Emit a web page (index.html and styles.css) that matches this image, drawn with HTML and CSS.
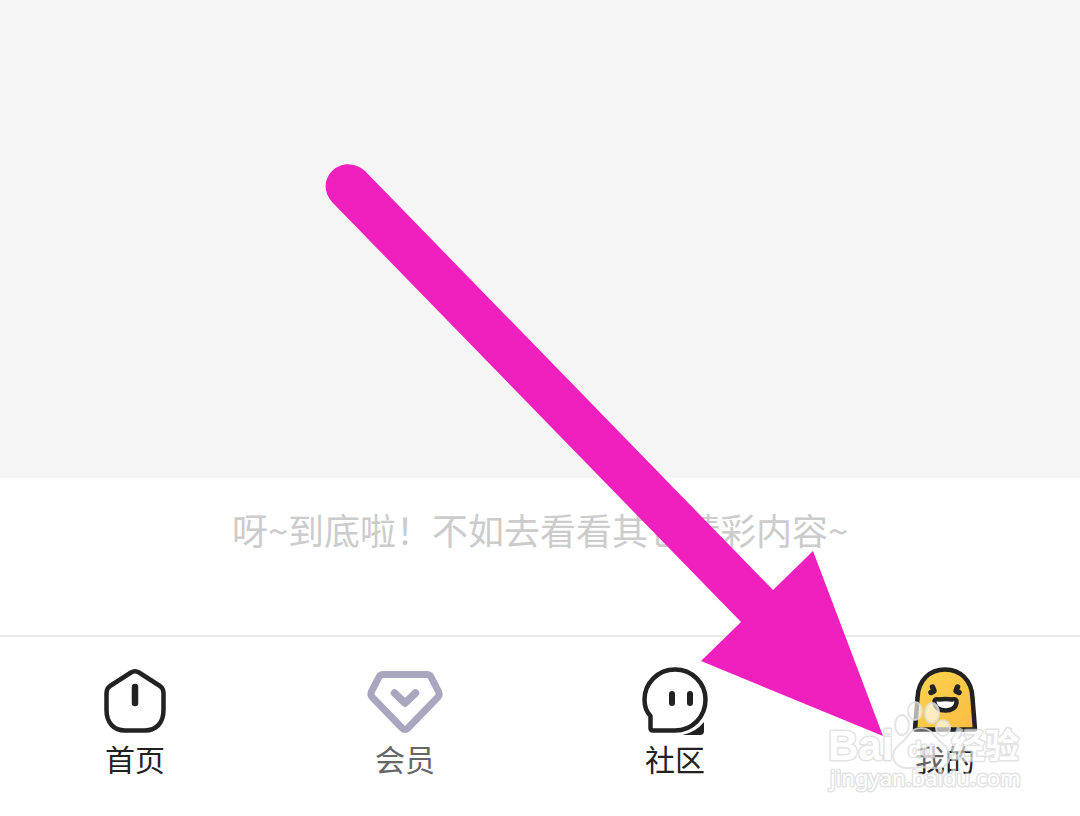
FILE: index.html
```html
<!DOCTYPE html>
<html lang="zh-CN">
<head>
    <meta charset="UTF-8">
    <meta name="viewport" content="width=device-width, initial-scale=1.0">
    <title>我的</title>
    <link rel="stylesheet" href="styles.css">
</head>
<body>
    <!-- Content Section -->
    <main class="content">
        <div class="feed"></div>
        <p class="feed-end">呀~到底啦！不如去看看其它精彩内容~</p>
    </main>

    <!-- Tab Bar -->
    <nav class="tab-bar">
        <a class="tab" href="#home">
            <svg class="tab-icon" viewBox="0 0 80 72" aria-hidden="true">
                <path d="M36 7.500Q40 5 44 7.500L65 21Q68.500 23.500 68.500 28V45C68.500 58 61 65.500 50 65.500H30C19 65.500 11.500 58 11.500 45V28Q11.500 23.500 15 21Z" fill="none" stroke="#222" stroke-width="4.500" stroke-linejoin="round"/>
                <path d="M40 22V38" stroke="#222" stroke-width="6.500" stroke-linecap="round"/>
            </svg>
            <span>首页</span>
        </a>
        <a class="tab tab-vip" href="#vip">
            <svg class="tab-icon" viewBox="0 0 80 72" aria-hidden="true">
                <path d="M18 9.500H62Q64.500 9.500 66 12L73.500 26.500Q75 29.500 73 32L43 63Q40 66 37 63L7 32Q5 29.500 6.500 26.500L14 12Q15.500 9.500 18 9.500Z" fill="none" stroke="#a9a6bf" stroke-width="7" stroke-linejoin="round"/>
                <path d="M29.500 28L40 38L50.500 28" fill="none" stroke="#a9a6bf" stroke-width="7.500" stroke-linecap="round" stroke-linejoin="round"/>
            </svg>
            <span>会员</span>
        </a>
        <a class="tab" href="#community">
            <svg class="tab-icon" viewBox="0 0 80 72" aria-hidden="true">
                <path d="M69 57V66Q69 70 65 70H47.500Q61 67 69 57Z" fill="#222"/>
                <path d="M40 4.500C57 4.500 70.500 18 70.500 34.500C70.500 52 57 65.500 40 65.500H18Q15.500 65.500 15.500 63V51C11.500 47 9.500 41 9.500 34.500C9.500 18 23 4.500 40 4.500Z" fill="#fff" stroke="#222" stroke-width="4.500" stroke-linejoin="round"/>
                <path d="M37 29V38M55 29V38" stroke="#222" stroke-width="6" stroke-linecap="round"/>
            </svg>
            <span>社区</span>
        </a>
        <a class="tab" href="#mine">
            <svg class="tab-icon" viewBox="0 0 80 72" aria-hidden="true">
                <defs>
                    <linearGradient id="ghost" x1="0" y1="0" x2="1" y2="1">
                        <stop offset="0" stop-color="#fcd54d"/>
                        <stop offset="1" stop-color="#f8bd43"/>
                    </linearGradient>
                </defs>
                <path d="M10 64.500L12.500 33C13 15 25 4.500 40 4.500C55 4.500 67 15 67.500 33L70 64.500Z" fill="url(#ghost)" stroke="#222" stroke-width="4.500" stroke-linejoin="round"/>
                <path d="M27.500 22L29 26L26 27.500M52.500 22L51 26L54 27.500" fill="none" stroke="#222" stroke-width="5.500" stroke-linecap="round" stroke-linejoin="round"/>
                <path d="M34 34.500Q40.500 33.500 47 34.500Q52 33 51.500 38Q50 45.500 40.500 45.500Q31 45.500 29.500 38Q29 33 34 34.500Z" fill="#fff" stroke="#222" stroke-width="4.500"/>
            </svg>
            <span>我的</span>
        </a>
    </nav>

    <!-- Pointer and Watermark -->
    <svg class="overlay" viewBox="0 0 1080 816" aria-hidden="true">
        <path d="M332 202C324 193 323 180 332 171C341 162 355 162 365 171L773 590L813 551L883 736L701 661L741 622Z" fill="#ef20bd"/>
        <g class="watermark">
            <path class="mark-pad" d="M921 728C909 728 909 738 900 744C888 752 893 770 909 768C917 767 926 767 934 768C951 770 954 752 943 744C934 738 933 728 921 728Z"/>
            <ellipse cx="902" cy="725" rx="7" ry="10"/>
            <ellipse cx="915" cy="711" rx="7" ry="9"/>
            <ellipse cx="932" cy="713" rx="7" ry="10"/>
            <ellipse cx="943" cy="728" rx="7" ry="8"/>
        </g>
        <g class="watermark watermark-text">
            <text class="mark-logo" x="828" y="760">Bai</text>
            <text class="mark-du" x="908" y="757">du</text>
            <text class="mark-name" x="951" y="758">经验</text>
            <text class="mark-url" x="830" y="786">jingyan.baidu.com</text>
        </g>
    </svg>
</body>
</html>
```
FILE: styles.css
```css
/* General Reset */
* {
    margin: 0;
    padding: 0;
    box-sizing: border-box;
    font-family: "Noto Sans CJK SC", sans-serif;
}

body {
    position: relative;
    display: flex;
    flex-direction: column;
    min-height: 100vh;
    background-color: #ffffff;
}

/* Content Section */
.content {
    flex-grow: 1;
    display: flex;
    flex-direction: column;
}

.feed {
    flex-grow: 1;
    background-color: #f5f5f5;
}

.feed-end {
    padding: 25px 20px 80px;
    color: #cccccc;
    font-size: 36px;
    line-height: 52px;
    text-align: center;
}

/* Tab Bar */
.tab-bar {
    display: flex;
    padding: 28px 0 36px;
    border-top: 2px solid #e9e9eb;
    background-color: #ffffff;
}

.tab {
    flex: 1;
    display: flex;
    flex-direction: column;
    align-items: center;
    color: #222222;
    font-size: 30px;
    line-height: 43px;
    text-decoration: none;
}

.tab-vip {
    color: #666666;
}

.tab-icon {
    display: block;
    width: 80px;
    height: 72px;
}

/* Pointer and Watermark */
.overlay {
    position: absolute;
    top: 0;
    left: 0;
    width: 100%;
    height: 100%;
    pointer-events: none;
}

.watermark {
    fill: rgba(255, 255, 255, 0.65);
    stroke: rgba(222, 222, 222, 0.8);
    stroke-width: 2px;
}

.mark-pad {
    fill: rgba(255, 255, 255, 0.3);
}

/* The outline sits behind the letters */
.watermark-text {
    fill: #ffffff;
    stroke: #d8d8d8;
    stroke-width: 3px;
    stroke-linejoin: round;
    paint-order: stroke;
    opacity: 0.7;
}

.mark-logo {
    font-family: "Liberation Sans", sans-serif;
    font-size: 42px;
    font-weight: bold;
}

.mark-du {
    font-family: "Liberation Sans", sans-serif;
    font-size: 22px;
    font-weight: bold;
}

.mark-name {
    font-size: 34px;
    font-weight: bold;
}

.mark-url {
    font-family: "Noto Sans", sans-serif;
    font-size: 22px;
}
```
